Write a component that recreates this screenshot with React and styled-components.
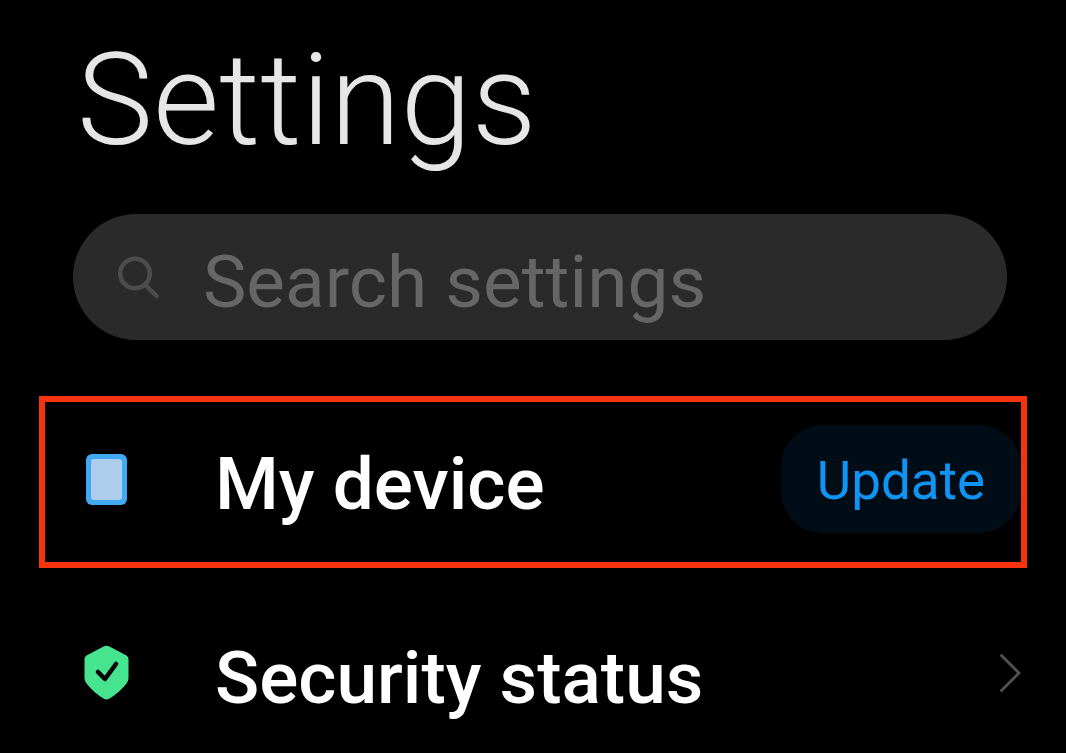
import React from "react";
import styled, { createGlobalStyle } from "styled-components";

const GlobalStyle = createGlobalStyle`
  * {
    box-sizing: border-box;
  }
  body {
    margin: 0;
    background: #000000;
    font-family: Roboto, sans-serif;
    overflow-x: hidden;
  }
`;

const Page = styled.main`
  padding: 24px 39px 0;
`;

const Title = styled.h1`
  margin: 0 0 38px;
  padding-left: 38px;
  color: #e6e6e6;
  font-size: 128px;
  font-weight: 300;
  line-height: 152px;
`;

const SearchBar = styled.label`
  display: flex;
  align-items: center;
  gap: 42px;
  height: 126px;
  margin: 0 20px 56px 34px;
  padding: 0 44px;
  border-radius: 63px;
  background: #2a2a2a;
`;

const SearchInput = styled.input`
  flex: 1;
  min-width: 0;
  padding: 10px 0 0;
  border: 0;
  outline: 0;
  background: transparent;
  color: #e6e6e6;
  font-family: inherit;
  font-size: 73px;
  line-height: 84px;
  &::placeholder {
    color: #666666;
    opacity: 1;
  }
`;

const List = styled.ul`
  display: flex;
  flex-direction: column;
  gap: 22px;
  margin: 0;
  padding: 0;
  list-style: none;
`;

const Row = styled.li`
  display: flex;
  align-items: center;
  height: 172px;
  padding: 0 0 6px 38px;
  border: 6px solid ${(props) => (props.$marked ? "#f5330f" : "transparent")};
`;

const IconSlot = styled.span`
  display: flex;
  width: 132px;
`;

const RowLink = styled.a`
  display: flex;
  flex: 1;
  align-items: center;
  color: #ffffff;
  font-size: 73px;
  font-weight: 500;
  line-height: 84px;
  text-decoration: none;
`;

const Label = styled.span`
  flex: 1;
  padding-top: 10px;
`;

const UpdateButton = styled.button`
  width: 240px;
  height: 108px;
  padding: 4px 0 0;
  border: 0;
  border-radius: 42px;
  background: #010d16;
  color: #1094f4;
  font-family: inherit;
  font-size: 53px;
  cursor: pointer;
`;

const SearchIcon = () => (
  <svg width="44" height="44" viewBox="0 0 44 44" fill="none" stroke="#4c4c4c" strokeWidth="4.5" aria-hidden="true">
    <circle cx="18" cy="18.5" r="14.8" />
    <path d="M28.5 30L39.5 41" strokeLinecap="round" />
  </svg>
);

const DeviceIcon = () => (
  <svg width="46" height="52" viewBox="0 0 46 52" aria-hidden="true">
    <rect x="3" y="1" width="41" height="51" rx="6" fill="#40a9f2" />
    <rect x="8" y="6" width="31" height="41" rx="3" fill="#aecdec" />
  </svg>
);

const ShieldIcon = () => (
  <svg width="46" height="56" viewBox="0 0 46 56" aria-hidden="true">
    <path d="M20.5 1.5Q23.500 0 26.500 1.500L43.500 10.500Q45.500 11.500 45.500 14V33Q45.500 36 43.500 38.500Q36 48 26.500 53.500Q23.500 55.500 20.500 53.500Q11 48 3.500 38.500Q1.500 36 1.500 33V14Q1.500 11.500 3.500 10.500Z" fill="#46e48e" />
    <path d="M15 27L22 34L33 19" fill="none" stroke="#000000" strokeWidth="4.5" strokeLinecap="round" strokeLinejoin="round" />
  </svg>
);

const ChevronIcon = () => (
  <svg width="24" height="40" viewBox="0 0 24 40" fill="none" stroke="#505050" strokeWidth="3" strokeLinecap="round" aria-hidden="true">
    <path d="M4.500 2.500L22 20L4.500 37.500" />
  </svg>
);

const App = () => {
  return (
    <>
      <GlobalStyle />
      <Page>
        <Title>Settings</Title>
        <SearchBar>
          <SearchIcon />
          <SearchInput type="text" placeholder="Search settings" aria-label="Search settings" />
        </SearchBar>
        <List>
          <Row $marked>
            <RowLink href="#device">
              <IconSlot><DeviceIcon /></IconSlot>
              <Label>My device</Label>
            </RowLink>
            <UpdateButton type="button">Update</UpdateButton>
          </Row>
          <Row>
            <RowLink href="#security">
              <IconSlot><ShieldIcon /></IconSlot>
              <Label>Security status</Label>
              <ChevronIcon />
            </RowLink>
          </Row>
        </List>
      </Page>
    </>
  );
};

export default App;
